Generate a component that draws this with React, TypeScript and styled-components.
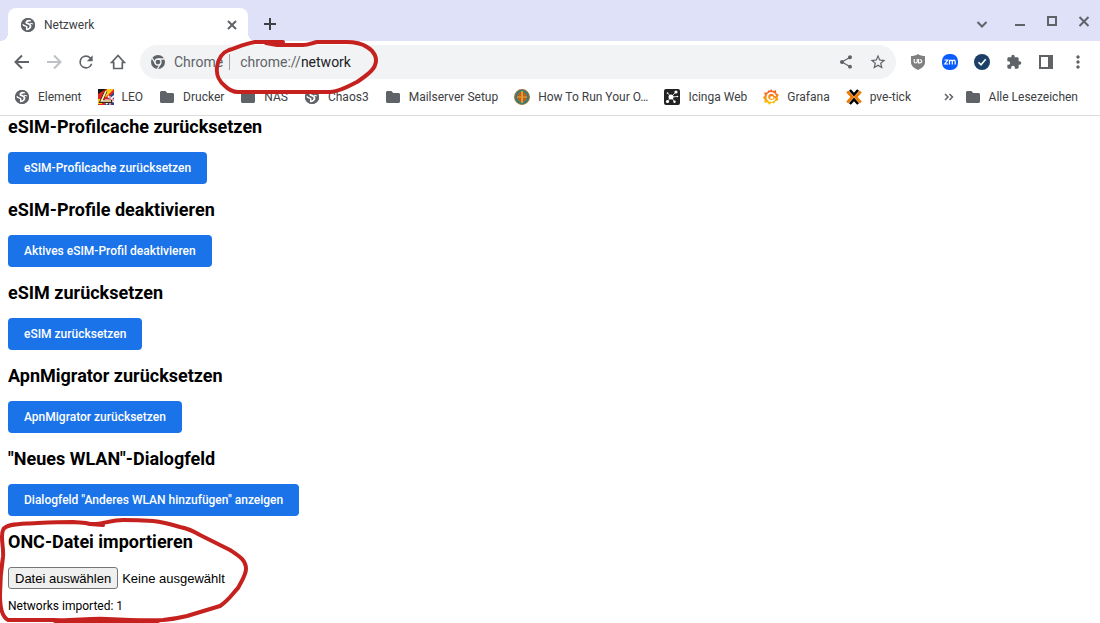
import React, { useRef, useState } from "react";
import styled, { createGlobalStyle } from "styled-components";

const GlobalStyle = createGlobalStyle`
  *, *::before, *::after { box-sizing: border-box; }
  body {
    margin: 0;
    background: #fff;
    color: #000;
    font-family: Roboto, "Liberation Sans", sans-serif;
    font-size: 12px;
  }
`;

const Page = styled.div`
  position: relative;
  min-height: 100vh;
  overflow: hidden;
`;

const TabStrip = styled.header`
  display: flex;
  align-items: flex-start;
  height: 41px;
  padding: 8px 0 0 8px;
  background: #dee1f8;
`;

const Tab = styled.div`
  position: relative;
  display: flex;
  align-items: center;
  gap: 8px;
  width: 240px;
  height: 33px;
  padding: 0 8px 0 12px;
  border-radius: 8px 8px 0 0;
  background: #fff;
  color: #3c4043;

  &::before,
  &::after {
    content: "";
    position: absolute;
    bottom: 0;
    width: 8px;
    height: 8px;
  }
  &::before {
    right: 100%;
    background: radial-gradient(circle at 0 0, transparent 8px, #fff 8px);
  }
  &::after {
    left: 100%;
    background: radial-gradient(circle at 100% 0, transparent 8px, #fff 8px);
  }
`;

const TabTitle = styled.span`
  flex: 1;
`;

const IconButton = styled.button<{ $size?: number; $muted?: boolean }>`
  display: flex;
  flex: none;
  align-items: center;
  justify-content: center;
  width: ${(p) => p.$size ?? 32}px;
  height: ${(p) => p.$size ?? 32}px;
  padding: 0;
  border: 0;
  background: none;
  color: ${(p) => (p.$muted ? "#bdc1c6" : "#5f6368")};
`;

const NewTab = styled(IconButton)`
  margin-left: 6px;
  color: #3c4043;
`;

const WindowControls = styled.div`
  display: flex;
  margin-left: auto;
`;

const TabSearch = styled(IconButton)`
  margin-right: 6px;
`;

const Toolbar = styled.div`
  display: flex;
  align-items: center;
  gap: 6px;
  padding: 4px 6px 0;
`;

const ButtonGroup = styled.div`
  display: flex;
`;

const Omnibox = styled.div`
  display: flex;
  flex: 1;
  align-items: center;
  min-width: 0;
  height: 34px;
  padding: 0 2px 0 10px;
  border-radius: 17px;
  background: #f1f3f4;
  color: #5f6368;
  font-size: 14px;
`;

const SiteName = styled.span`
  margin: 0 10px 0 8px;
  padding-right: 6px;
  border-right: 1px solid #9aa0a6;
  line-height: 16px;
`;

const Scheme = styled.label`
  flex: none;
`;

const UrlInput = styled.input`
  flex: 1;
  min-width: 0;
  padding: 0;
  border: 0;
  outline: 0;
  background: none;
  color: #202124;
  font: inherit;
`;

const BookmarkBar = styled.nav`
  display: flex;
  align-items: center;
  gap: 16px;
  height: 37px;
  padding: 0 22px 0 14px;
  border-bottom: 1px solid #dadce0;
`;

const Bookmark = styled.a`
  display: flex;
  flex: none;
  align-items: center;
  gap: 8px;
  color: #3c4043;
  text-decoration: none;
  white-space: nowrap;
`;

const BookmarkEnd = styled.div`
  display: flex;
  align-items: center;
  gap: 8px;
  margin-left: auto;
`;

const Content = styled.main`
  display: flex;
  flex-direction: column;
  gap: 15px;
  padding: 0 8px;
`;

const Section = styled.section`
  display: flex;
  flex-direction: column;
  align-items: flex-start;
`;

const Heading = styled.h2`
  margin: 0 0 14px;
  font-size: 18px;
  line-height: 22px;
`;

const ActionButton = styled.button`
  height: 32px;
  padding: 0 16px;
  border: 0;
  border-radius: 4px;
  background: #1a73e8;
  color: #fff;
  font-family: inherit;
  font-size: 12px;
  font-weight: 500;
`;

const FileRow = styled.div`
  display: flex;
  align-items: center;
  gap: 4px;
  font: 13px "Liberation Sans", sans-serif;
`;

const FileButton = styled.button`
  height: 22px;
  padding: 0 6px;
  border: 1px solid #767676;
  border-radius: 3px;
  background: #efefef;
  color: #000;
  font: inherit;
`;

const ImportStatus = styled.p`
  margin: 9px 0 0;
  line-height: 16px;
`;

const Annotations = styled.svg`
  position: absolute;
  top: 0;
  left: 0;
  pointer-events: none;
`;

const Globe = () => (
  <svg width="16" height="16" viewBox="0 0 16 16" fill="none">
    <circle cx="8" cy="8" r="7" fill="#5f6368" />
    <path d="M11.200 3.300C8.600 3.200 6.300 4 6.300 5.400c0 1.700 3.900.9 4.200 3.400.2 1.900-1.900 3.600-4.500 3.900" stroke="#fff" strokeWidth="1.900" />
    <path d="M2.300 7.200c1.600 2 3.200 1.300 4.400 2.600v2.400" stroke="#fff" strokeWidth="1.500" />
    <path d="M10 6.200l3.200.8" stroke="#fff" strokeWidth="1" />
    <circle cx="8" cy="8" r="6.300" stroke="#5f6368" strokeWidth="1.500" />
  </svg>
);

const Folder = () => (
  <svg width="16" height="16" viewBox="0 0 16 16">
    <path
      d="M2.500 2h4l1.700 2h5.300c.8 0 1.500.6 1.500 1.400v7.100c0 .8-.7 1.500-1.500 1.500h-11C1.700 14 1 13.300 1 12.500v-9C1 2.600 1.700 2 2.500 2z"
      fill="#5f6368"
    />
  </svg>
);

const Leo = () => (
  <svg width="16" height="16" viewBox="0 0 16 16" fill="none">
    <path fill="#e3261b" d="M0 0h16v16H0z" />
    <path fill="#151515" d="M0 0h8L0 5z" />
    <path fill="#ffc914" d="M9 0h7L8 8 6 7zM0 10h4v5H0z" />
    <path fill="#2c438e" d="M16 3v13H7v-4z" />
    <path d="M8 15l8-8M10 7l6 6M7 11h9M12 7v9" stroke="#fff" strokeWidth="1.800" />
    <path d="M7 11h9M12 7v9" stroke="#d3202e" strokeWidth=".9" />
    <path d="M8 2L3 12.500h11" stroke="#3a2410" strokeWidth="3" />
    <path d="M8 2L3.500 12H13" stroke="#fff3c4" strokeWidth="1.700" />
  </svg>
);

const Emblem = () => (
  <svg width="16" height="16" viewBox="0 0 16 16" fill="none">
    <circle cx="8" cy="8" r="7.300" fill="#1c7d95" stroke="#8f7434" strokeWidth="1.300" />
    <circle cx="8" cy="8" r="4.900" fill="#dd4420" stroke="#a07a2a" strokeWidth=".8" />
    <path d="M5.500 4v8M10.500 4v8M4 5.500h8M4 10.500h8" stroke="#a3761f" strokeWidth=".7" />
    <path d="M8 2v12" stroke="#d8a22a" strokeWidth="2" />
    <path d="M3 8h10" stroke="#d8a22a" strokeWidth="1.300" />
  </svg>
);

const Icinga = () => (
  <svg width="16" height="16" viewBox="0 0 16 16">
    <rect width="16" height="16" rx="2" fill="#222" />
    <path d="M7 8L3.500 4M7 8l5-5M7 8l6.500-.5M7 8l3.500 4.500M7 8l-3.500 4.500" stroke="#fff" strokeWidth=".8" />
    <g fill="#fff">
      <circle cx="7" cy="8" r="2.500" />
      <circle cx="12" cy="3" r="1.600" />
      <circle cx="3.500" cy="4" r=".8" />
      <circle cx="13.500" cy="7.500" r=".8" />
      <circle cx="10.500" cy="12.800" r="1.200" />
      <circle cx="3.500" cy="12.500" r="1.600" />
    </g>
  </svg>
);

const GrafanaLogo = () => (
  <svg width="16" height="16" viewBox="0 0 16 16" fill="none">
    <defs>
      <linearGradient id="grafana" x1="0" y1="0" x2="0" y2="1">
        <stop offset="0" stopColor="#f04e28" />
        <stop offset="1" stopColor="#ffd20a" />
      </linearGradient>
    </defs>
    <path
      d="M8 0l1.700 2.100 3.300-.8.200 3 2.600 1.500-1.300 2.400.9 3-2.800.7-1.400 2.700-2.600-.8L6.200 16l-1.500-2.500-3.400.3.400-3.100L0 8.400l1.800-1.800-.7-3.200 3 .2L5.500 1.200l1.700.6z"
      fill="url(#grafana)"
    />
    <path d="M12 9.500A4 4 0 1 1 12.200 7" stroke="#fff" strokeWidth="1.700" />
    <circle cx="8.800" cy="8.600" r="1.500" fill="#fff" />
  </svg>
);

const Proxmox = () => (
  <svg width="16" height="16" viewBox="0 0 16 16" fill="none" strokeWidth="2.600">
    <path d="M1.200 2.500L6.300 8l-5.100 5.500M14.800 2.500L9.700 8l5.100 5.500" stroke="#f07800" />
    <path d="M3.900 1L8 5.600 12.100 1M3.900 15L8 10.400l4.100 4.600" stroke="#000" />
  </svg>
);

const ChromeMark = () => (
  <svg width="16" height="16" viewBox="0 0 16 16" fill="none">
    <circle cx="8" cy="8" r="7" fill="#5f6368" />
    <circle cx="8" cy="8" r="3" stroke="#f1f3f4" strokeWidth="1.300" />
    <path d="M8 5h6.500M5.400 9.500L2.100 4M10.600 9.500L7.400 15" stroke="#f1f3f4" strokeWidth="1.300" />
  </svg>
);

const Glyph = ({ d, size = 20 }: { d: string; size?: number }) => (
  <svg width={size} height={size} viewBox="0 0 24 24" fill="currentColor">
    <path d={d} />
  </svg>
);

const Line = ({ d, size = 16, width = 2 }: { d: string; size?: number; width?: number }) => (
  <svg width={size} height={size} viewBox={`0 0 ${size} ${size}`} fill="none" stroke="currentColor" strokeWidth={width}>
    <path d={d} />
  </svg>
);

const PATHS = {
  reload:
    "M17.650 6.350A7.958 7.958 0 0 0 12 4a8 8 0 1 0 7.730 10h-2.080A6 6 0 1 1 12 6c1.660 0 3.140.69 4.220 1.780L13 11h7V4l-2.350 2.350z",
  share:
    "M18 16.080c-.76 0-1.440.3-1.960.77L8.910 12.700c.05-.23.09-.46.09-.7s-.04-.47-.09-.7l7.050-4.110c.54.5 1.250.81 2.040.81 1.660 0 3-1.340 3-3s-1.340-3-3-3-3 1.340-3 3c0 .24.04.47.09.7L8.040 9.810C7.500 9.310 6.790 9 6 9c-1.660 0-3 1.340-3 3s1.340 3 3 3c.79 0 1.500-.31 2.040-.81l7.120 4.160c-.05.21-.08.43-.08.65 0 1.610 1.310 2.920 2.920 2.920s2.920-1.310 2.920-2.920-1.310-2.920-2.920-2.920z",
  star:
    "M22 9.240l-7.190-.62L12 2 9.190 8.630 2 9.240l5.460 4.730L5.820 21 12 17.270 18.180 21l-1.630-7.030L22 9.240zM12 15.400l-3.760 2.270 1-4.280-3.320-2.880 4.380-.38L12 6.100l1.710 4.040 4.380.38-3.320 2.880 1 4.280L12 15.400z",
  puzzle:
    "M20.500 11H19V7c0-1.100-.9-2-2-2h-4V3.500a2.500 2.500 0 0 0-5 0V5H4c-1.100 0-1.990.9-1.990 2v3.800H3.500c1.490 0 2.700 1.210 2.700 2.700s-1.210 2.700-2.700 2.700H2V20c0 1.100.9 2 2 2h3.800v-1.500c0-1.490 1.210-2.700 2.700-2.700s2.700 1.210 2.700 2.700V22H17c1.100 0 2-.9 2-2v-4h1.500a2.500 2.500 0 0 0 0-5z",
  dots:
    "M12 8c1.100 0 2-.9 2-2s-.9-2-2-2-2 .9-2 2 .9 2 2 2zm0 2c-1.100 0-2 .9-2 2s.9 2 2 2 2-.9 2-2-.9-2-2-2zm0 6c-1.100 0-2 .9-2 2s.9 2 2 2 2-.9 2-2-.9-2-2-2z",
};

const Shield = () => (
  <svg width="16" height="16" viewBox="0 0 16 16" fill="none">
    <path d="M8 0c2 1.500 4.400 2 7 2v6c0 4-3 6.200-7 8-4-1.800-7-4-7-8V2c2.600 0 5-.5 7-2z" fill="#808080" />
    <path d="M4.200 5v2.700c0 1.700 3 1.700 3 0V5M8.500 5v3.900h1.200c2.700 0 2.700-3.400 0-3.400" stroke="#fff" strokeWidth="1.100" />
  </svg>
);

const ZoomBadge = () => (
  <svg width="16" height="16" viewBox="0 0 16 16" fill="none">
    <rect width="16" height="16" rx="7" fill="#0b5cff" />
    <path
      d="M2.500 6h3.300L2.800 10h3.400M7.500 10.500V6M7.500 7.500c0-1.800 2.800-1.800 2.800 0v3M10.300 7.500c0-1.800 2.900-1.800 2.900 0v3"
      stroke="#fff"
      strokeWidth="1.200"
    />
  </svg>
);

const CheckBadge = () => (
  <svg width="16" height="16" viewBox="0 0 16 16" fill="none">
    <circle cx="8" cy="8" r="8" fill="#1b3f66" />
    <path d="M4.500 8.200L7 10.700l4.700-5.500" stroke="#fff" strokeWidth="1.600" />
  </svg>
);

const SidePanel = () => (
  <svg width="14" height="14" viewBox="0 0 14 14" fill="#5f6368">
    <path fillRule="evenodd" d="M0 0h14v14H0zM2 2v10h7V2z" />
  </svg>
);

const bookmarks = [
  { name: "Element", Icon: Globe },
  { name: "LEO", Icon: Leo },
  { name: "Drucker", Icon: Folder },
  { name: "NAS", Icon: Folder },
  { name: "Chaos3", Icon: Globe },
  { name: "Mailserver Setup", Icon: Folder },
  { name: "How To Run Your O…", Icon: Emblem },
  { name: "Icinga Web", Icon: Icinga },
  { name: "Grafana", Icon: GrafanaLogo },
  { name: "pve-tick", Icon: Proxmox },
];

const actions = [
  { title: "eSIM-Profilcache zurücksetzen", button: "eSIM-Profilcache zurücksetzen" },
  { title: "eSIM-Profile deaktivieren", button: "Aktives eSIM-Profil deaktivieren" },
  { title: "eSIM zurücksetzen", button: "eSIM zurücksetzen" },
  { title: "ApnMigrator zurücksetzen", button: "ApnMigrator zurücksetzen" },
  { title: '"Neues WLAN"-Dialogfeld', button: 'Dialogfeld "Anderes WLAN hinzufügen" anzeigen' },
];

export default function App() {
  const fileInput = useRef<HTMLInputElement>(null);
  const [fileName, setFileName] = useState("Keine ausgewählt");

  return (
    <Page>
      <GlobalStyle />
      <TabStrip>
        <Tab>
          <Globe />
          <TabTitle>Netzwerk</TabTitle>
          <IconButton $size={16} aria-label="Tab schließen">
            <Line d="M4 4l8 8M12 4l-8 8" />
          </IconButton>
        </Tab>
        <NewTab aria-label="Neuer Tab">
          <Line d="M8 2v12M2 8h12" />
        </NewTab>
        <WindowControls>
          <TabSearch aria-label="Tabs suchen">
            <Line d="M3.500 6L8 10.500 12.500 6" />
          </TabSearch>
          <IconButton aria-label="Minimieren">
            <Line d="M3 9h10" />
          </IconButton>
          <IconButton aria-label="Maximieren">
            <Line d="M4 1h8v8H4z" />
          </IconButton>
          <IconButton aria-label="Schließen">
            <Line d="M3.500 1l9 9M12.500 1l-9 9" />
          </IconButton>
        </WindowControls>
      </TabStrip>

      <Toolbar>
        <ButtonGroup>
          <IconButton aria-label="Zurück">
            <Line d="M15 8H2M8 1.500L1.500 8 8 14.500" />
          </IconButton>
          <IconButton $muted aria-label="Vorwärts">
            <Line d="M1 8h13M8 1.500L14.500 8 8 14.500" />
          </IconButton>
          <IconButton aria-label="Neu laden">
            <Glyph d={PATHS.reload} />
          </IconButton>
          <IconButton aria-label="Startseite">
            <Line d="M8 1.500L1.700 8.500h2V14.500h8.600V8.500h2z" width={1.7} />
          </IconButton>
        </ButtonGroup>
        <Omnibox>
          <ChromeMark />
          <SiteName>Chrome</SiteName>
          <Scheme htmlFor="url">chrome://</Scheme>
          <UrlInput id="url" defaultValue="network" />
          <IconButton aria-label="Teilen">
            <Glyph d={PATHS.share} size={16} />
          </IconButton>
          <IconButton aria-label="Lesezeichen hinzufügen">
            <Glyph d={PATHS.star} size={18} />
          </IconButton>
        </Omnibox>
        <ButtonGroup>
          <IconButton aria-label="uBlock">
            <Shield />
          </IconButton>
          <IconButton aria-label="Zoom">
            <ZoomBadge />
          </IconButton>
          <IconButton aria-label="Checker">
            <CheckBadge />
          </IconButton>
          <IconButton aria-label="Erweiterungen">
            <Glyph d={PATHS.puzzle} size={16} />
          </IconButton>
          <IconButton aria-label="Seitenleiste">
            <SidePanel />
          </IconButton>
          <IconButton aria-label="Menü">
            <Glyph d={PATHS.dots} />
          </IconButton>
        </ButtonGroup>
      </Toolbar>

      <BookmarkBar>
        {bookmarks.map(({ name, Icon }) => (
          <Bookmark key={name} href="#">
            <Icon />
            {name}
          </Bookmark>
        ))}
        <BookmarkEnd>
          <IconButton $size={16} aria-label="Weitere Lesezeichen">
            <Line d="M4 5l3 3-3 3M8.500 5l3 3-3 3" width={1.5} />
          </IconButton>
          <Bookmark href="#">
            <Folder />
            Alle Lesezeichen
          </Bookmark>
        </BookmarkEnd>
      </BookmarkBar>

      <Content>
        {actions.map(({ title, button }) => (
          <Section key={title}>
            <Heading>{title}</Heading>
            <ActionButton>{button}</ActionButton>
          </Section>
        ))}
        <Section>
          <Heading>ONC-Datei importieren</Heading>
          <FileRow>
            <input
              ref={fileInput}
              type="file"
              hidden
              onChange={(e) => setFileName(e.target.files?.[0]?.name ?? "Keine ausgewählt")}
            />
            <FileButton onClick={() => fileInput.current?.click()}>Datei auswählen</FileButton>
            <span>{fileName}</span>
          </FileRow>
          <ImportStatus>Networks imported: 1</ImportStatus>
        </Section>
      </Content>

      <Annotations width="400" height="623" fill="none" stroke="#c5221f" strokeWidth="4" strokeLinecap="round" strokeLinejoin="round" aria-hidden="true">
        <path d="M283 42H255C244 44 238 47 229 50 221 53 218 60 217 67 216 76 219 81 225 86Q231 92 238 92H331C341 91 349 86 357 82 366 76 374 70 375 65 378 58 374 51 367 47 361 43 354 42 346 42H317C312 43 308 45 303 45H277L266 43" />
        <path d="M103 525L90 524C84 522 79 523 73 522 55 522 40 523 27 523.500 15 524 5 525 3 530 0 537 4 547 3 557 1 570 0 580 0 595 0 609 2 617 8 620H53C72 621 89 618 107 619 126 620 145 621 163 620Q175 619 187 616L220 606C229 600 233 593 238 588 241 582 246 575 246 569 246 560 239 556 230 550L200 535Q190 529 180 527C170 524 163 522 153 521Q138 520 123 520C110 520 102 525 90 524" />
        <path d="M55 621H158" />
      </Annotations>
    </Page>
  );
}
